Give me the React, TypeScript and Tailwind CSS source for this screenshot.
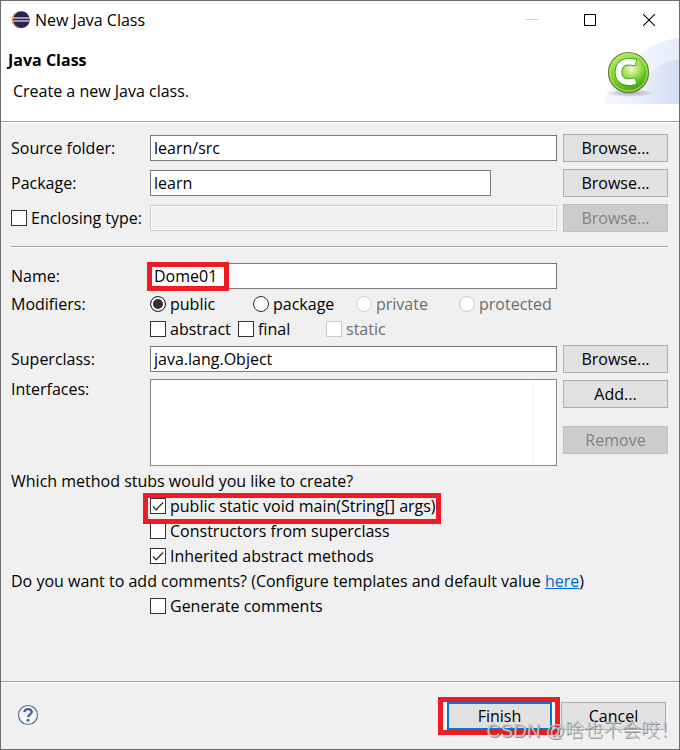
import type { ReactNode } from "react";

const modifiers = [
	{ name: "public", checked: true, disabled: false },
	{ name: "package", checked: false, disabled: false },
	{ name: "private", checked: false, disabled: true },
	{ name: "protected", checked: false, disabled: true },
];

const flags = [
	{ name: "abstract", disabled: false },
	{ name: "final", disabled: false },
	{ name: "static", disabled: true },
];

function EclipseLogo() {
	return (
		<svg width="20" height="20" viewBox="0 0 20 20" aria-hidden="true">
			<circle cx="10.4" cy="9.7" r="8.8" fill="#f7941e" />
			<circle cx="11.6" cy="9.7" r="8.9" fill="#fff" />
			<circle cx="11.4" cy="9.7" r="8.4" fill="#2c2255" />
			<path d="M3.200 8h16.600M3.200 11h16.600" stroke="#c3bfd8" strokeWidth="1.6" />
		</svg>
	);
}

function ClassBanner() {
	return (
		<svg width="75" height="66" viewBox="0 0 75 66" aria-hidden="true">
			<defs>
				<linearGradient id="sky" x1="0" x2="1">
					<stop offset="0" stopColor="#f7f9fe" />
					<stop offset="0.5" stopColor="#e9eefa" />
					<stop offset="1" stopColor="#d2ddf5" />
				</linearGradient>
				<linearGradient id="haze" x1="0" x2="1">
					<stop offset="0" stopColor="#fff" stopOpacity="0.5" />
					<stop offset="1" stopColor="#f1f5fd" stopOpacity="0.6" />
				</linearGradient>
				<linearGradient id="ball" x1="0.2" y1="0" x2="0.7" y2="1">
					<stop offset="0" stopColor="#b9ee6a" />
					<stop offset="0.5" stopColor="#7ed321" />
					<stop offset="1" stopColor="#3f9f10" />
				</linearGradient>
				<radialGradient id="glow" cx="0.6" cy="0.4" r="0.5">
					<stop offset="0" stopColor="#f4ffe0" />
					<stop offset="1" stopColor="#a6e84c" stopOpacity="0" />
				</radialGradient>
				<radialGradient id="shade">
					<stop offset="0" stopColor="#555" stopOpacity="0.5" />
					<stop offset="1" stopColor="#555" stopOpacity="0" />
				</radialGradient>
			</defs>
			<path d="M0 66C2 53 8 42 16 35C33 15 51 3 75 0V66Z" fill="url(#sky)" />
			<path d="M16 35C33 15 51 3 75 0V21C61 23 48 31 39 42Z" fill="url(#haze)" />
			<ellipse cx="26" cy="55" rx="24" ry="4" fill="url(#shade)" />
			<circle cx="24.5" cy="34.5" r="20" fill="url(#ball)" stroke="#6b7a3c" strokeWidth="1.2" />
			<circle cx="24.5" cy="34.5" r="18.6" fill="none" stroke="#b5ec6c" strokeWidth="1" />
			<circle cx="24.5" cy="34.5" r="16" fill="url(#glow)" />
			<path
				d="M32.300 24.800C20.500 21.300 14.500 26 14.500 34C14.500 42.300 20.500 46.300 32.300 43"
				fill="none"
				stroke="#45a51a"
				strokeWidth="7.8"
			/>
			<path
				d="M31.500 24.800C20.500 21.500 14.500 26 14.500 34C14.500 42.200 20.500 46.200 31.500 43"
				fill="none"
				stroke="#fff"
				strokeWidth="5.8"
			/>
		</svg>
	);
}

function Separator() {
	return <div className="h-[2px] border-t border-[#a0a0a0] bg-white" />;
}

function PushButton({ children, disabled, primary }: { children: ReactNode; disabled?: boolean; primary?: boolean }) {
	return (
		<button
			type="button"
			disabled={disabled}
			className={
				"relative flex h-7 w-[105px] items-center justify-center bg-[#e1e1e1] disabled:border-[#bfbfbf] disabled:bg-[#cccccc] disabled:text-[#838383] " +
				(primary ? "border-2 border-[#0078d7]" : "border border-[#adadad]")
			}
		>
			{children}
		</button>
	);
}

function TextField({ id, value, disabled, label }: { id: string; value?: string; disabled?: boolean; label?: string }) {
	return (
		<input
			id={id}
			type="text"
			aria-label={label}
			defaultValue={value}
			disabled={disabled}
			className="block h-[26px] w-full border border-[#7a7a7a] bg-white px-[3px] disabled:border-[#cccccc] disabled:bg-[#f0f0f0] disabled:shadow-[inset_0_0_0_1px_#fff]"
		/>
	);
}

function CheckBox({ label, checked, disabled }: { label: string; checked?: boolean; disabled?: boolean }) {
	return (
		<label
			className={"flex h-[25px] items-center gap-1 pb-px whitespace-nowrap " + (disabled ? "text-[#6d6d6d]" : "")}
		>
			<span className="grid size-4 shrink-0">
				<input
					type="checkbox"
					defaultChecked={checked}
					disabled={disabled}
					className="peer col-start-1 row-start-1 size-4 appearance-none border border-[#333] bg-white disabled:border-[#cccccc]"
				/>
				<svg
					viewBox="0 0 16 16"
					className="pointer-events-none invisible col-start-1 row-start-1 size-4 peer-checked:visible"
					aria-hidden="true"
				>
					<path d="M3 8.500L6.200 11.700L13 4.500" fill="none" stroke="#333" strokeWidth="1.3" />
				</svg>
			</span>
			{label}
		</label>
	);
}

function Radio({ label, checked, disabled }: { label: string; checked?: boolean; disabled?: boolean }) {
	return (
		<label className={"flex h-[25px] items-center gap-1 pb-px " + (disabled ? "text-[#6d6d6d]" : "")}>
			<input
				type="radio"
				name="modifier"
				defaultChecked={checked}
				disabled={disabled}
				className="size-4 shrink-0 appearance-none rounded-full border border-[#333] bg-white checked:bg-[#333] checked:shadow-[inset_0_0_0_2px_#fff] disabled:border-[#cccccc]"
			/>
			{label}
		</label>
	);
}

// label | field | button
const row = "grid grid-cols-[139px_minmax(0,1fr)_111px] items-center";

export default function App() {
	return (
		<div className="flex min-h-screen flex-col border border-[#6b6b6b] bg-[#f0f0f0] font-['Open_Sans','Noto_Sans_CJK_SC',sans-serif] text-base leading-5 text-black">
			<header className="bg-white">
				<div className="flex h-[37px] items-center pl-[9px]">
					<EclipseLogo />
					<span className="flex-1 pl-[5px]">New Java Class</span>
					<div className="flex">
						<button type="button" aria-label="Minimize" disabled className="grid w-[58px] place-items-center text-[#cccccc]">
							<svg width="12" height="12" viewBox="0 0 12 12">
								<path d="M0 5.500H12" stroke="currentColor" />
							</svg>
						</button>
						<button type="button" aria-label="Maximize" className="grid w-[58px] place-items-center">
							<svg width="12" height="12" viewBox="0 0 12 12">
								<path d="M.5.5h11v11H.5z" fill="none" stroke="#000" />
							</svg>
						</button>
						<button type="button" aria-label="Close" className="grid w-[60px] place-items-center">
							<svg width="12" height="12" viewBox="0 0 12 12">
								<path d="M0 0L12 12M12 0L0 12" stroke="#000" strokeWidth="1.1" />
							</svg>
						</button>
					</div>
				</div>
				<div className="flex h-[83px] justify-between">
					<div className="flex flex-col gap-[11px] pt-3 pl-[7px]">
						<h1 className="font-bold">Java Class</h1>
						<p className="pl-[5px]">Create a new Java class.</p>
					</div>
					<ClassBanner />
				</div>
			</header>
			<Separator />

			<main className="flex-1 pr-[11px] pl-[10px]">
				<div className="flex flex-col gap-[7px] pt-[11px] pb-[14px]">
					<div className={row}>
						<label htmlFor="source">Source folder:</label>
						<TextField id="source" value="learn/src" />
						<div className="flex justify-end">
							<PushButton>Browse...</PushButton>
						</div>
					</div>
					<div className={row}>
						<label htmlFor="package">Package:</label>
						<div className="pr-[66px]">
							<TextField id="package" value="learn" />
						</div>
						<div className="flex justify-end">
							<PushButton>Browse...</PushButton>
						</div>
					</div>
					<div className={row}>
						<CheckBox label="Enclosing type:" />
						<TextField id="enclosing" label="Enclosing type" disabled />
						<div className="flex justify-end">
							<PushButton disabled>Browse...</PushButton>
						</div>
					</div>
				</div>
				<Separator />

				<div className={row + " pt-[15px] pb-[3px]"}>
					<label htmlFor="name">Name:</label>
					<div className="relative">
						<TextField id="name" value="Dome01" />
						<div className="pointer-events-none absolute -top-px -left-[3px] h-[29px] w-[82px] border-5 border-[#ed1c24]" />
					</div>
				</div>

				<div className="grid grid-cols-[139px_minmax(0,1fr)]">
					<span className="leading-[25px]">Modifiers:</span>
					<div>
						<div className="grid grid-cols-[repeat(4,103px)]">
							{modifiers.map((item) => (
								<Radio key={item.name} label={item.name} checked={item.checked} disabled={item.disabled} />
							))}
						</div>
						<div className="grid grid-cols-[repeat(3,88px)]">
							{flags.map((item) => (
								<CheckBox key={item.name} label={item.name} disabled={item.disabled} />
							))}
						</div>
					</div>
				</div>

				<div className={row + " pt-[3px] pb-[6px]"}>
					<label htmlFor="superclass">Superclass:</label>
					<TextField id="superclass" value="java.lang.Object" />
					<div className="flex justify-end">
						<PushButton>Browse...</PushButton>
					</div>
				</div>
				<div className="grid grid-cols-[139px_minmax(0,1fr)_111px] items-start pb-[3px]">
					<span>Interfaces:</span>
					<div className="h-[87px] border border-[#828790] bg-white py-px pr-[22px]">
						<div className="h-full border-r border-[#edf2f9]" />
					</div>
					<div className="flex flex-col items-end gap-[18px] pt-px">
						<PushButton>Add...</PushButton>
						<PushButton disabled>Remove</PushButton>
					</div>
				</div>

				<p className="leading-[25px]">Which method stubs would you like to create?</p>
				<div className="flex flex-col items-start pl-[139px]">
					<div className="relative">
						<CheckBox label="public static void main(String[] args)" checked />
						<div className="pointer-events-none absolute -top-px -left-[7px] h-[31px] w-[298px] border-5 border-[#ed1c24]" />
					</div>
					<CheckBox label="Constructors from superclass" />
					<CheckBox label="Inherited abstract methods" checked />
				</div>
				<p className="leading-[25px]">
					Do you want to add comments? (Configure templates and default value{" "}
					<a href="#" className="text-[#0066cc] underline">
						here
					</a>
					)
				</p>
				<div className="pl-[139px]">
					<CheckBox label="Generate comments" />
				</div>
			</main>

			<Separator />
			<footer className="relative flex h-[66px] items-start justify-between pt-[19px] pr-[13px] pl-4">
				<button type="button" aria-label="Help" className="pt-[2px]">
					<svg width="22" height="22" viewBox="0 0 22 22">
						<circle cx="11" cy="11" r="9.5" fill="#f4f5f8" stroke="#5a6f96" strokeWidth="1.2" />
						<path
							d="M7.400 8.200C7.600 6 9 5.200 11.200 5.200C13.400 5.200 14.700 6.200 14.700 7.900C14.700 10.400 11.200 10.500 11.200 13.300"
							fill="none"
							stroke="#4c6290"
							strokeWidth="2.3"
						/>
						<circle cx="11.100" cy="16.300" r="1.500" fill="#4c6290" />
					</svg>
				</button>
				<div className="flex gap-[9px]">
					<div className="relative">
						<div className="pointer-events-none absolute -top-[5px] -right-2 -left-[9px] h-[38px] border-5 border-[#ed1c24] bg-[#fafafa]" />
						<PushButton primary>Finish</PushButton>
					</div>
					<PushButton>Cancel</PushButton>
				</div>
				<span className="pointer-events-none absolute right-0 bottom-1.5 font-['Liberation_Sans','Noto_Sans_CJK_SC',sans-serif] text-[19px] leading-6 font-light whitespace-nowrap text-[#c4c4c4] [text-shadow:1px_1px_0_#55555599]">
					CSDN @啥也不会哎！
				</span>
			</footer>
		</div>
	);
}
